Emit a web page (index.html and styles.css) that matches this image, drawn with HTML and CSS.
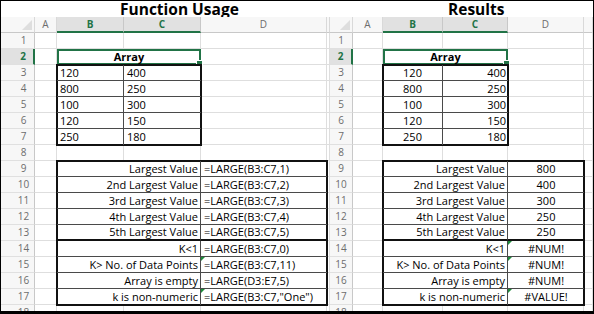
FILE: index.html
```html
<!DOCTYPE html>
<html>
<head>
<meta charset="utf-8">
<link rel="stylesheet" href="styles.css">
</head>
<body>
<div class="frame">
  <section class="sheet sheet-left">
    <div class="title title-left">Function Usage</div>
    <div class="grid">
      <div class="ch corner"></div><div class="ch">A</div><div class="ch sel">B</div><div class="ch sel">C</div><div class="ch">D</div><div class="ch"></div>

      <div class="rh">1</div><div class="c"></div><div class="c"></div><div class="c"></div><div class="c"></div><div class="c"></div>
      <div class="rh sel">2</div><div class="c"></div><div class="c array">Array<span class="handle"></span></div><div class="c"></div><div class="c"></div>

      <div class="blk blk-data">
        <div class="t l">120</div><div class="t l">400</div>
        <div class="t l">800</div><div class="t l">250</div>
        <div class="t l">100</div><div class="t l">300</div>
        <div class="t l">120</div><div class="t l">150</div>
        <div class="t l last">250</div><div class="t l last">180</div>
      </div>
      <div class="rh">3</div><div class="c"></div><div class="c"></div><div class="c"></div>
      <div class="rh">4</div><div class="c"></div><div class="c"></div><div class="c"></div>
      <div class="rh">5</div><div class="c"></div><div class="c"></div><div class="c"></div>
      <div class="rh">6</div><div class="c"></div><div class="c"></div><div class="c"></div>
      <div class="rh">7</div><div class="c"></div><div class="c"></div><div class="c"></div>
      <div class="rh">8</div><div class="c"></div><div class="c"></div><div class="c"></div><div class="c"></div><div class="c"></div>

      <div class="blk blk-res">
        <div class="t r">Largest Value</div><div class="t l">=LARGE(B3:C7,1)</div>
        <div class="t r">2nd Largest Value</div><div class="t l">=LARGE(B3:C7,2)</div>
        <div class="t r">3rd Largest Value</div><div class="t l">=LARGE(B3:C7,3)</div>
        <div class="t r">4th Largest Value</div><div class="t l">=LARGE(B3:C7,4)</div>
        <div class="t r thick">5th Largest Value</div><div class="t l thick">=LARGE(B3:C7,5)</div>
        <div class="t r">K&lt;1</div><div class="t l">=LARGE(B3:C7,0)</div>
        <div class="t r">K&gt; No. of Data Points</div><div class="t l err">=LARGE(B3:C7,11)</div>
        <div class="t r">Array is empty</div><div class="t l">=LARGE(D3:E7,5)</div>
        <div class="t r last">k is non-numeric</div><div class="t l last err">=LARGE(B3:C7,"One")</div>
      </div>
      <div class="rh">9</div><div class="c"></div><div class="c"></div>
      <div class="rh">10</div><div class="c"></div><div class="c"></div>
      <div class="rh">11</div><div class="c"></div><div class="c"></div>
      <div class="rh">12</div><div class="c"></div><div class="c"></div>
      <div class="rh">13</div><div class="c"></div><div class="c"></div>
      <div class="rh">14</div><div class="c"></div><div class="c"></div>
      <div class="rh">15</div><div class="c"></div><div class="c"></div>
      <div class="rh">16</div><div class="c"></div><div class="c"></div>
      <div class="rh">17</div><div class="c"></div><div class="c"></div>
      <div class="rh">18</div><div class="c"></div><div class="c"></div><div class="c"></div><div class="c"></div><div class="c"></div>
    </div>
  </section>

  <section class="sheet sheet-right">
    <div class="title title-right">Results</div>
    <div class="grid">
      <div class="ch corner"></div><div class="ch">A</div><div class="ch sel">B</div><div class="ch sel">C</div><div class="ch">D</div><div class="ch"></div>

      <div class="rh">1</div><div class="c"></div><div class="c"></div><div class="c"></div><div class="c"></div><div class="c"></div>
      <div class="rh sel">2</div><div class="c"></div><div class="c array">Array<span class="handle"></span></div><div class="c"></div><div class="c"></div>

      <div class="blk blk-data">
        <div class="t m">120</div><div class="t r">400</div>
        <div class="t m">800</div><div class="t r">250</div>
        <div class="t m">100</div><div class="t r">300</div>
        <div class="t m">120</div><div class="t r">150</div>
        <div class="t m last">250</div><div class="t r last">180</div>
      </div>
      <div class="rh">3</div><div class="c"></div><div class="c"></div><div class="c"></div>
      <div class="rh">4</div><div class="c"></div><div class="c"></div><div class="c"></div>
      <div class="rh">5</div><div class="c"></div><div class="c"></div><div class="c"></div>
      <div class="rh">6</div><div class="c"></div><div class="c"></div><div class="c"></div>
      <div class="rh">7</div><div class="c"></div><div class="c"></div><div class="c"></div>
      <div class="rh">8</div><div class="c"></div><div class="c"></div><div class="c"></div><div class="c"></div><div class="c"></div>

      <div class="blk blk-res">
        <div class="t r">Largest Value</div><div class="t m">800</div>
        <div class="t r">2nd Largest Value</div><div class="t m">400</div>
        <div class="t r">3rd Largest Value</div><div class="t m">300</div>
        <div class="t r">4th Largest Value</div><div class="t m">250</div>
        <div class="t r thick">5th Largest Value</div><div class="t m thick">250</div>
        <div class="t r">K&lt;1</div><div class="t m err">#NUM!</div>
        <div class="t r">K&gt; No. of Data Points</div><div class="t m err">#NUM!</div>
        <div class="t r">Array is empty</div><div class="t m">#NUM!</div>
        <div class="t r last">k is non-numeric</div><div class="t m last err">#VALUE!</div>
      </div>
      <div class="rh">9</div><div class="c"></div><div class="c"></div>
      <div class="rh">10</div><div class="c"></div><div class="c"></div>
      <div class="rh">11</div><div class="c"></div><div class="c"></div>
      <div class="rh">12</div><div class="c"></div><div class="c"></div>
      <div class="rh">13</div><div class="c"></div><div class="c"></div>
      <div class="rh">14</div><div class="c"></div><div class="c"></div>
      <div class="rh">15</div><div class="c"></div><div class="c"></div>
      <div class="rh">16</div><div class="c"></div><div class="c"></div>
      <div class="rh">17</div><div class="c"></div><div class="c"></div>
      <div class="rh">18</div><div class="c"></div><div class="c"></div><div class="c"></div><div class="c"></div><div class="c"></div>
    </div>
  </section>
</div>
</body>
</html>
```

FILE: styles.css
```css
html, body {
  margin: 0;
  padding: 0;
  background: #fff;
}

.frame {
  width: 594px;
  height: 314px;
  box-sizing: border-box;
  border: 1px solid #000;
  border-bottom-width: 3px;
  display: flex;
  overflow: hidden;
  background: #fff;
  font-family: "Open Sans", "Liberation Sans", sans-serif;
  font-size: 11px;
  color: #000;
}

.sheet {
  display: flex;
  flex-direction: column;
}

.sheet-left {
  width: 329px;
  flex: none;
}

.sheet-right {
  flex: 1;
}

.title {
  height: 16px;
  font-weight: 700;
  font-size: 15.5px;
  line-height: 16px;
  white-space: nowrap;
}

.title-left { padding-left: 119px; }
.title-right { padding-left: 118px; }

.grid {
  display: grid;
  grid-template-rows: repeat(19, 16px);
}

.sheet-left .grid {
  grid-template-columns: 34px 22px 67px 77px 126px 3px;
}

.sheet-right .grid {
  grid-template-columns: 23px 30px 60px 65px 76px 1fr;
}

/* column headers */
.ch {
  box-sizing: border-box;
  background: #f7f7f7;
  border-right: 1px solid #d9d9d9;
  border-bottom: 1px solid #c8c8c8;
  color: #6d6d6d;
  font-size: 10px;
  line-height: 15px;
  text-align: center;
}

.ch.sel {
  background: #e1e1e1;
  color: #217346;
  font-weight: 700;
  border-bottom: 2px solid #217346;
  border-right-color: #c8c8c8;
}

.ch.corner {
  position: relative;
}

.ch.corner::after {
  content: "";
  position: absolute;
  right: 2px;
  bottom: 2px;
  width: 0;
  height: 0;
  border-left: 10px solid transparent;
  border-bottom: 10px solid #dedede;
}

.sheet-left .ch.corner::after { right: 2px; }

/* row headers */
.rh {
  box-sizing: border-box;
  background: #f7f7f7;
  border-right: 1px solid #c8c8c8;
  border-bottom: 1px solid #e0e0e0;
  color: #6d6d6d;
  font-size: 10px;
  line-height: 15px;
  text-align: center;
}

.sheet-left .rh {
  padding-left: 12px;
}

.rh.sel {
  background: #e1e1e1;
  color: #217346;
  font-weight: 700;
  border-right: 2px solid #217346;
}

/* plain cells */
.c {
  box-sizing: border-box;
  border-right: 1px solid #dedede;
  border-bottom: 1px solid #dedede;
}

.c.array {
  grid-column: span 2;
  position: relative;
  border: 2px solid #217346;
  font-weight: 700;
  text-align: center;
  line-height: 12px;
}

.handle {
  position: absolute;
  right: -4px;
  bottom: -4px;
  width: 5px;
  height: 5px;
  background: #217346;
  border: 1px solid #fff;
}

/* bordered blocks */
.blk {
  display: grid;
  position: relative;
  z-index: 1;
  background: #fff;
  outline: 2px solid #111;
  outline-offset: -1px;
}

.blk-data {
  grid-column: 3 / 5;
  grid-row: 4 / 9;
  grid-template-rows: repeat(5, 16px);
}

.blk-res {
  grid-column: 3 / 6;
  grid-row: 10 / 19;
  grid-template-rows: repeat(9, 16px);
}

.sheet-left .blk-data { grid-template-columns: 67px 77px; }
.sheet-left .blk-res { grid-template-columns: 144px 126px; }
.sheet-right .blk-data { grid-template-columns: 60px 65px; }
.sheet-right .blk-res { grid-template-columns: 125px 76px; }

.t {
  box-sizing: border-box;
  border-bottom: 1px solid #4a4a4a;
  line-height: 15px;
  white-space: nowrap;
  position: relative;
}

.t:nth-child(odd) {
  border-right: 1px solid #4a4a4a;
}

.t.last {
  border-bottom: none;
}

.t.thick {
  border-bottom: 2px solid #111;
  line-height: 14px;
}

.t.l { text-align: left; padding-left: 3px; }
.t.r { text-align: right; padding-right: 2px; }
.t.m { text-align: center; }

.t.err::before {
  content: "";
  position: absolute;
  left: 0;
  top: 0;
  width: 0;
  height: 0;
  border-top: 4px solid #1e8c3c;
  border-right: 4px solid transparent;
}
```
